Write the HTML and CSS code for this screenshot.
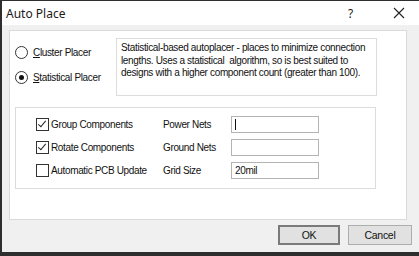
FILE: index.html
```html
<!DOCTYPE html>
<html lang="en">
<head>
    <meta charset="UTF-8">
    <title>Auto Place</title>
    <link rel="stylesheet" href="styles.css">
</head>
<body>
    <div class="window">
        <div class="titlebar">
            <span class="title">Auto Place</span>
            <span class="help">?</span>
            <span class="close">
                <svg width="12" height="12" viewBox="0 0 12 12"><path d="M1 1 L11 11 M11 1 L1 11" stroke="#222" stroke-width="1.1" fill="none"/></svg>
            </span>
        </div>
        <div class="content">
            <div class="panel">
                <div class="top-row">
                    <div class="radios">
                        <label class="radio"><span class="dot"></span><span><u>C</u>luster Placer</span></label>
                        <label class="radio"><span class="dot on"></span><span><u>S</u>tatistical Placer</span></label>
                    </div>
                    <div class="desc">Statistical-based autoplacer - places to minimize connection lengths. Uses a statistical&nbsp; algorithm, so is best suited to designs with a higher component count (greater than 100).</div>
                </div>
                <div class="group">
                    <label class="check"><span class="box on"></span>Group Components</label>
                    <span class="lbl">Power Nets</span>
                    <span class="field"><span class="caret"></span></span>

                    <label class="check"><span class="box on"></span>Rotate Components</label>
                    <span class="lbl">Ground Nets</span>
                    <span class="field"></span>

                    <label class="check"><span class="box"></span>Automatic PCB Update</label>
                    <span class="lbl">Grid Size</span>
                    <span class="field">20mil</span>
                </div>
            </div>
            <div class="buttons">
                <button class="btn default">OK</button>
                <button class="btn">Cancel</button>
            </div>
        </div>
    </div>
</body>
</html>
```

FILE: styles.css
```css
body{
    margin: 0;
    background-color: #2e2e2e;
    font-family: "Liberation Sans", Arial, sans-serif;
    font-size: 10px;
    letter-spacing: -0.35px;
    color: #111;
}
.window{
    margin: 1px 0 0 2px;
    width: 417px;
    height: 251px;
    background-color: #f0f0f0;
    display: flex;
    flex-direction: column;
}
.titlebar{
    height: 24px;
    background-color: #fff;
    display: flex;
    align-items: center;
    font-family: "Noto Sans", "Open Sans", sans-serif;
    font-size: 12px;
    letter-spacing: 0;
    color: #1a1a1a;
}
.title{
    margin-left: 4px;
    flex: 1;
}
.help{
    width: 14px;
    margin-right: 31px;
}
.close{
    display: flex;
    margin-right: 14px;
}
.content{
    flex: 1;
    display: flex;
    flex-direction: column;
}
.panel{
    margin: 5px 0 0 7px;
    width: 398px;
    height: 190px;
    background-color: #fff;
    border: 1px solid #dadada;
    padding: 7px 0 0 5px;
    box-sizing: border-box;
}
.top-row{
    display: flex;
}
.radios{
    width: 101px;
    padding-top: 8px;
    display: flex;
    flex-direction: column;
    gap: 12px;
}
.radio{
    display: flex;
    align-items: center;
    gap: 5px;
    height: 13px;
}
.dot{
    width: 11px;
    height: 11px;
    border: 1px solid #333;
    border-radius: 50%;
    background-color: #fff;
    position: relative;
}
.dot.on::after{
    content: "";
    position: absolute;
    left: 3px;
    top: 3px;
    width: 5px;
    height: 5px;
    border-radius: 50%;
    background-color: #111;
}
.desc{
    width: 261px;
    height: 58px;
    box-sizing: border-box;
    border: 1px solid #dcdcdc;
    padding: 3px 4px;
    line-height: 12.5px;
}
.group{
    margin-top: 11px;
    width: 361px;
    height: 82px;
    box-sizing: border-box;
    border: 1px solid #dcdcdc;
    padding: 5px 0 0 20px;
    display: grid;
    grid-template-columns: 127px 68px 88px;
    grid-auto-rows: 23px;
    align-items: center;
}
.check{
    display: flex;
    align-items: center;
    gap: 2px;
}
.box{
    width: 11px;
    height: 11px;
    border: 1px solid #333;
    background-color: #fff;
    position: relative;
}
.box.on::after{
    content: "";
    position: absolute;
    left: 3px;
    top: 0px;
    width: 3px;
    height: 7px;
    border: solid #222;
    border-width: 0 1px 1px 0;
    transform: rotate(40deg);
}
.field{
    height: 17px;
    box-sizing: border-box;
    border: 1px solid #b4b4b4;
    background-color: #fff;
    padding: 0 3px;
    display: flex;
    align-items: center;
}
.caret{
    width: 1px;
    height: 11px;
    background-color: #111;
}
.buttons{
    display: flex;
    justify-content: flex-end;
    gap: 8px;
    margin: 5px 7px 0 0;
}
.btn{
    width: 64px;
    height: 20px;
    font-family: "Liberation Sans", Arial, sans-serif;
    font-size: 10.5px;
    letter-spacing: -0.3px;
    color: #111;
    background-color: #e1e1e1;
    border: 1px solid #adadad;
    padding: 0;
}
.btn.default{
    width: 62px;
    border: 2px solid #7a7a7a;
}
```
